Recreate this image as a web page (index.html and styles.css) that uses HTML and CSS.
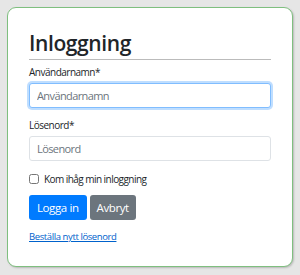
FILE: index.html
```html
<!DOCTYPE html>
<html lang="sv">
<head>
    <meta charset="UTF-8">
    <meta name="viewport" content="width=device-width, initial-scale=1.0">
    <title>Inloggning</title>
    <link rel="stylesheet" href="styles.css">
</head>
<body>
    <div class="login-card">
        <h1>Inloggning</h1>
        <form class="login-form" onsubmit="return false;">
            <label class="field-label" for="username">Användarnamn*</label>
            <input type="text" id="username" class="field-input focused" placeholder="Användarnamn">

            <label class="field-label second" for="password">Lösenord*</label>
            <input type="password" id="password" class="field-input" placeholder="Lösenord">

            <label class="remember">
                <input type="checkbox" class="remember-box">
                <span>Kom ihåg min inloggning</span>
            </label>

            <div class="buttons">
                <button type="submit" class="btn btn-primary">Logga in</button>
                <button type="button" class="btn btn-secondary">Avbryt</button>
            </div>

            <a href="#" class="forgot">Beställa nytt lösenord</a>
        </form>
    </div>
</body>
</html>
```

FILE: styles.css
```css
* {
    box-sizing: border-box;
}

body {
    margin: 0;
    padding: 7px;
    background-color: #e6e6e6;
    font-family: 'Open Sans', sans-serif;
    color: #212529;
}

.login-card {
    width: 286px;
    height: 260px;
    background: white;
    border: 1px solid #7fbf7f;
    border-radius: 9px;
    padding: 22px 21px 0 21px;
    box-shadow: 1px 1px 2px rgba(0, 0, 0, 0.2);
}

h1 {
    margin: 0;
    font-size: 21px;
    font-weight: 600;
    line-height: 26px;
    padding-bottom: 3px;
    border-bottom: 1px solid #bbb;
    letter-spacing: -0.4px;
}

.login-form {
    display: flex;
    flex-direction: column;
    align-items: flex-start;
}

.field-label {
    font-size: 10px;
    line-height: 14px;
    letter-spacing: -0.5px;
    margin-top: 5px;
}

.field-label.second {
    margin-top: 10px;
}

.field-input {
    width: 100%;
    height: 25px;
    margin-top: 4px;
    padding: 0 7px;
    border: 1px solid #dee2e6;
    border-radius: 3px;
    font-family: inherit;
    font-size: 11px;
    letter-spacing: -0.6px;
    color: #495057;
    outline: none;
}

.field-input::placeholder {
    color: #6c757d;
}

.field-input.focused {
    border-color: #80bdff;
    box-shadow: 0 0 0 2px rgba(0, 123, 255, 0.25);
}

.remember {
    display: flex;
    align-items: center;
    gap: 5px;
    font-size: 10px;
    line-height: 14px;
    letter-spacing: -0.55px;
    margin-top: 11px;
}

.remember-box {
    margin: 0;
    width: 10px;
    height: 10px;
}

.buttons {
    display: flex;
    gap: 3px;
    margin-top: 9px;
}

.btn {
    height: 25px;
    padding: 0 7px;
    border: none;
    border-radius: 3px;
    font-family: inherit;
    font-size: 11.5px;
    letter-spacing: -0.4px;
    color: white;
    cursor: pointer;
}

.btn-primary {
    background: #007bff;
    padding: 0 8px;
}

.btn-secondary {
    background: #6c757d;
}

.forgot {
    margin-top: 10px;
    font-size: 9.5px;
    line-height: 14px;
    letter-spacing: -0.4px;
    color: #0062cc;
}
```
